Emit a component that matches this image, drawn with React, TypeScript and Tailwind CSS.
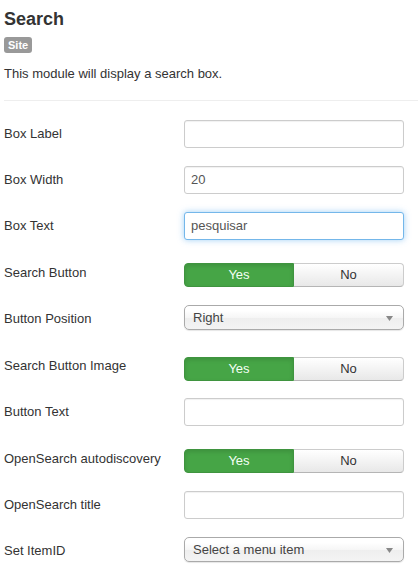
import React from "react";

const font = { fontFamily: '"Liberation Sans", Arial, sans-serif' };

function TextInput({ value = "", focus = false }: { value?: string; focus?: boolean }) {
  return (
    <div
      className={
        "w-[220px] h-[28px] rounded-[3px] border bg-white flex items-center pl-[6px] text-[13px] text-[#555] " +
        (focus
          ? "border-[#74b7ea] shadow-[0_0_6px_rgba(82,168,236,0.55)]"
          : "border-[#cccccc] shadow-[inset_0_1px_1px_rgba(0,0,0,0.06)]")
      }
    >
      {value}
    </div>
  );
}

function Toggle() {
  return (
    <div className="w-[220px] h-[24px] flex text-[13px]">
      <div className="w-[110px] h-full rounded-l-[4px] bg-[#46a546] border border-[#3f943f] text-[#f4fff4] flex items-center justify-center shadow-[inset_0_2px_4px_rgba(0,0,0,0.12)]">
        Yes
      </div>
      <div className="w-[110px] h-full rounded-r-[4px] bg-gradient-to-b from-[#ffffff] to-[#e8e8e8] border border-l-0 border-[#cccccc] border-b-[#b5b5b5] text-[#333] flex items-center justify-center">
        No
      </div>
    </div>
  );
}

function Select({ value }: { value: string }) {
  return (
    <div className="relative w-[220px] h-[25px] rounded-[5px] border border-[#aaaaaa] bg-[linear-gradient(#ffffff_20%,#f6f6f6_50%,#eeeeee_52%,#f4f4f4_100%)] shadow-[0_1px_1px_rgba(0,0,0,0.1)] flex items-center pl-[8px] text-[13px] text-[#444]">
      {value}
      <svg className="absolute right-[10px] top-[10px]" width="7" height="5" viewBox="0 0 7 5">
        <path d="M0 0 L7 0 L3.5 5 Z" fill="#888" />
      </svg>
    </div>
  );
}

function Row({
  label,
  children,
  mt,
  pt,
}: {
  label: string;
  children: React.ReactNode;
  mt: string;
  pt: string;
}) {
  return (
    <div className={"flex items-start " + mt}>
      <div className={"w-[180px] text-[13px] leading-[18px] text-[#333] " + pt}>{label}</div>
      {children}
    </div>
  );
}

export default function App() {
  return (
    <div className="w-[418px] h-[578px] bg-white overflow-hidden" style={font}>
      <div className="pl-[4px] pt-[9px]">
        <div className="text-[18px] leading-[20px] font-bold text-[#333]">Search</div>
        <div className="mt-[8px] inline-flex h-[16px] items-center px-[4px] rounded-[3px] bg-[#999999] text-white text-[11px] font-bold">
          Site
        </div>
        <div className="mt-[9px] text-[13px] leading-[18px] text-[#333]">
          This module will display a search box.
        </div>
      </div>
      <div className="ml-[4px] mt-[17px] h-px bg-[#eeeeee]" />
      <div className="pl-[4px]">
        <Row label="Box Label" mt="mt-[19px]" pt="pt-[5px]">
          <TextInput />
        </Row>
        <Row label="Box Width" mt="mt-[18px]" pt="pt-[5px]">
          <TextInput value="20" />
        </Row>
        <Row label="Box Text" mt="mt-[18px]" pt="pt-[5px]">
          <TextInput value="pesquisar" focus />
        </Row>
        <Row label="Search Button" mt="mt-[23px]" pt="pt-[1px]">
          <Toggle />
        </Row>
        <Row label="Button Position" mt="mt-[18px]" pt="pt-[5px]">
          <Select value="Right" />
        </Row>
        <Row label="Search Button Image" mt="mt-[27px]" pt="pt-0">
          <Toggle />
        </Row>
        <Row label="Button Text" mt="mt-[17px]" pt="pt-[5px]">
          <TextInput />
        </Row>
        <Row label="OpenSearch autodiscovery" mt="mt-[23px]" pt="pt-[1px]">
          <Toggle />
        </Row>
        <Row label="OpenSearch title" mt="mt-[18px]" pt="pt-[5px]">
          <TextInput />
        </Row>
        <Row label="Set ItemID" mt="mt-[18px]" pt="pt-[5px]">
          <Select value="Select a menu item" />
        </Row>
      </div>
    </div>
  );
}
